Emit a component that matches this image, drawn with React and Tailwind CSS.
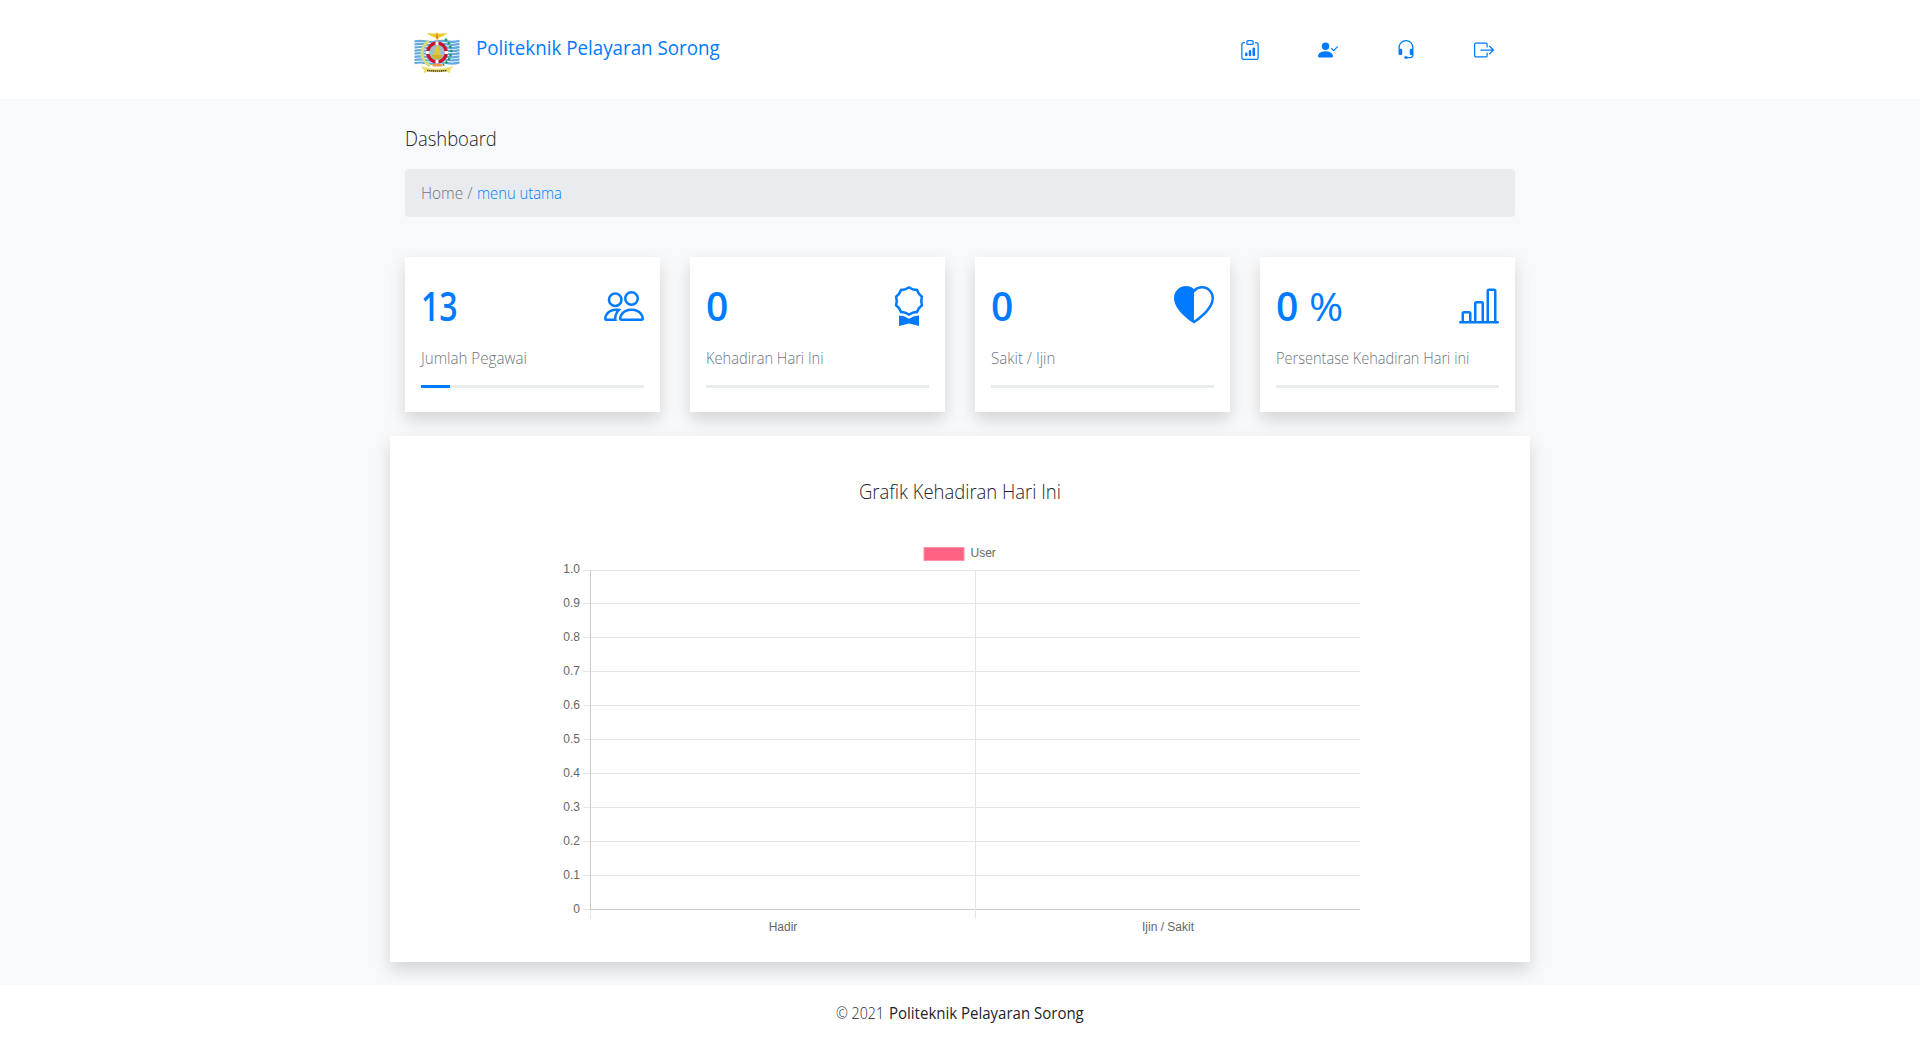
import { useLayoutEffect, useRef, useState } from "react";
import { BsClipboardData, BsPersonCheckFill, BsHeadset, BsBoxArrowRight, BsPeople, BsAward, BsHeartHalf, BsBarChartLine } from "react-icons/bs";

const navIcons = [BsClipboardData, BsPersonCheckFill, BsHeadset, BsBoxArrowRight];

const cards = [
  { value: "13", valueWidth: 37, label: "Jumlah Pegawai", width: 106, Icon: BsPeople, progress: 13 },
  { value: "0", valueWidth: 22, label: "Kehadiran Hari Ini", width: 118, Icon: BsAward, progress: 0 },
  { value: "0", valueWidth: 22, label: "Sakit / Ijin", width: 64, Icon: BsHeartHalf, progress: 0 },
  { value: "0", valueWidth: 22, suffix: "%", label: "Persentase Kehadiran Hari ini", width: 193, Icon: BsBarChartLine, progress: 0 },
];

const ticks = ["1.0", "0.9", "0.8", "0.7", "0.6", "0.5", "0.4", "0.3", "0.2", "0.1", "0"];

/* Text stretched or condensed horizontally to fill its given width. */
function Fit({ text, width, className = "" }) {
  const ref = useRef(null);
  const [scale, setScale] = useState(1);
  useLayoutEffect(() => {
    setScale(width / ref.current.offsetWidth);
  }, [text, width]);
  return (
    <span className="block whitespace-nowrap" style={{ width }}>
      <span ref={ref} className={`inline-block origin-left ${className}`} style={{ transform: `scaleX(${scale})` }}>{text}</span>
    </span>
  );
}

function Logo() {
  return (
    <svg width="50" height="50" viewBox="0 0 50 50" fill="none">
      {[0, 1, 2, 3, 4, 5, 6, 7].map((i) => (
        <path key={i} d={`M2.500 ${14.4 + i * 3.1}q5.500-1.200 11 0t11 0 11 0 12-.7`} stroke="#64a9df" strokeWidth="2.200" />
      ))}
      <path d="M17 14q-7 4-7 12t8 13" stroke="#d5dc74" strokeWidth="3" />
      <path d="M33 12q7 6 6 14t-8 12" stroke="#179c56" strokeWidth="2.400" strokeDasharray="2.400 1.800" />
      <circle cx="25" cy="25.500" r="9.300" fill="#9cc0cf" stroke="#c9142b" strokeWidth="3.200" />
      <path d="M25 14.500v3.500m0 15v3.500m-11-11h3.500m15 0h3.500" stroke="#fff" strokeWidth="3" />
      <path d="M24 19h2.500l1 6 1.500 6h-8l1.500-6z" fill="#e3c72e" />
      <path d="M20 28h10.500l-2 4h-7z" fill="#d0b32a" />
      <path d="M14.500 6l8 .8L25 5.500l2.500 1.300 8-.8-5 3.500-3.500 1-1.500 3.500-2-3.500-3.500-1z" fill="#ecc92c" />
      <path d="M25 7.500v4" stroke="#d96a27" strokeWidth="1.500" />
      <path d="M20.500 37h10v2.500h-10z" fill="#ee9a4a" />
      <path d="M8.500 39l6 1.500q10.500 2.500 21 0l6-1.500-3 3.500-1 4-2.500-2q-10 1.500-20 0l-2.500 2-1-4z" fill="#eede70" />
      <path d="M15 43.500q10 1 20 0" stroke="#554a20" strokeWidth="1.600" strokeDasharray="1.500 .5" />
    </svg>
  );
}

function Card({ value, valueWidth, suffix, label, width, Icon, progress }) {
  return (
    <div className="h-[155px] bg-white px-4 pt-[29px] shadow-[0_8px_16px_rgba(0,0,0,0.15)]">
      <div className="flex h-[60px] items-start justify-between text-[#007bff]">
        <div className="flex gap-[11px] text-[39px] leading-[40px]">
          <Fit text={value} width={valueWidth} className="font-semibold" />
          {suffix && <Fit text={suffix} width={34} />}
        </div>
        <Icon size={40} />
      </div>
      <div className="h-[39px] text-base font-light text-[#6c757d]">
        <Fit text={label} width={width} />
      </div>
      <div className="h-[3px] bg-[#e9ecef]">
        <div className="h-full bg-[#007bff]" style={{ width: `${progress}%` }} />
      </div>
    </div>
  );
}

function Chart() {
  return (
    <svg width="810" height="400" className="mx-auto block" fontFamily="Liberation Sans, Arial, sans-serif" fontSize="12" fill="#666">
      <rect x="369" y="7.500" width="40" height="13" fill="#ff6384" stroke="#ff92a9" />
      <text x="415.500" y="17">User</text>
      {ticks.map((t, i) => {
        const y = 30.5 + Math.floor(i * 33.95);
        return (
          <g key={t}>
            <path d={`M28 ${y}H805`} stroke="#e5e5e5" />
            <text x="25" y={i === 0 ? y + 2.5 : y + 3.5} textAnchor="end">{t}</text>
          </g>
        );
      })}
      <path d="M35.500 30v340M35 369.500h770" stroke="#cacaca" />
      <path d="M35.500 370v9M420.500 30v349" stroke="#e5e5e5" />
      <text x="228" y="391" textAnchor="middle">Hadir</text>
      <text x="613" y="391" textAnchor="middle">Ijin / Sakit</text>
    </svg>
  );
}

export default function App() {
  return (
    <div className="h-[1058px] overflow-hidden bg-[#f8f9fa] font-['Open_Sans','Noto_Sans',sans-serif] text-[#212529]">
      <header className="h-[99px] bg-white">
        <div className="mx-auto flex w-[1110px] justify-between">
          <div className="flex pt-[27px] pl-[7px]">
            <Logo />
            <div className="ml-[14px] pt-[6px] text-xl leading-[30px] text-[#007bff]">
              <Fit text="Politeknik Pelayaran Sorong" width={244} />
            </div>
          </div>
          <nav className="flex gap-[58px] pt-[40px] pr-[21px] text-[#007bff]">
            {navIcons.map((Icon, i) => <Icon key={i} size={20} />)}
          </nav>
        </div>
      </header>
      <main className="mx-auto h-[886px] w-[1110px]">
        <h1 className="h-[70px] pt-[25px] text-xl leading-[30px] font-light">
          <Fit text="Dashboard" width={92} />
        </h1>
        <div className="flex h-12 items-center gap-[5px] rounded bg-[#e9ecef] px-4 text-base font-light">
          <span className="text-[#6c757d]"><Fit text="Home /" width={51} /></span>
          <span className="text-[#007bff]"><Fit text="menu utama" width={85} /></span>
        </div>
        <div className="mt-10 grid grid-cols-4 gap-[30px]">
          {cards.map((c) => <Card key={c.label} {...c} />)}
        </div>
        <section className="-mx-[15px] mt-6 h-[526px] bg-white pt-[41px] shadow-[0_8px_16px_rgba(0,0,0,0.15)]">
          <h2 className="flex h-[63px] justify-center text-xl leading-[30px] font-light">
            <Fit text="Grafik Kehadiran Hari Ini" width={202} />
          </h2>
          <Chart />
        </section>
      </main>
      <footer className="flex h-[73px] justify-center gap-[5px] bg-white pt-4 text-base">
        <Fit text="© 2021" width={48} className="font-light" />
        <Fit text="Politeknik Pelayaran Sorong" width={195} />
      </footer>
    </div>
  );
}
